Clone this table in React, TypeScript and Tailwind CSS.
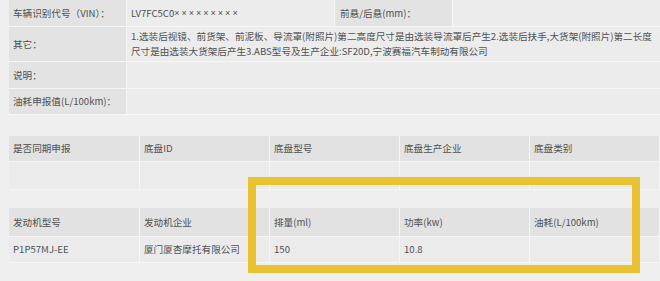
import React from "react";

const font = {
  fontFamily: '"Noto Sans CJK SC", "Noto Sans", sans-serif',
};

function Cell({
  children,
  className = "",
}: {
  children?: React.ReactNode;
  className?: string;
}) {
  return (
    <div
      className={
        "flex items-center pl-[4px] border-r border-b border-[#f6f6f6] " +
        className
      }
    >
      {children}
    </div>
  );
}

export default function App() {
  const cols5 = "grid grid-cols-[131px_130px_130px_130px_130px]";
  return (
    <div
      className="relative w-[660px] h-[281px] overflow-hidden bg-[#efefef] text-[9.6px] leading-[15px] text-[#505050]"
      style={font}
    >
      <div className="pl-[9px] flex flex-col">
        {/* top table */}
        <div className="grid grid-cols-[118px_208px_118px_216px]">
          <Cell className="h-[27px] bg-[#e3e3e3]">车辆识别代号（VIN）：</Cell>
          <Cell className="h-[27px] bg-[#ececec]">
            <span>LV7FC5C0</span>
            <span className="font-['Liberation_Sans',sans-serif] tracking-[2px] text-[9px]">
              ×××××××××
            </span>
          </Cell>
          <Cell className="h-[27px] bg-[#e3e3e3] pl-[5px]">前悬/后悬(mm)：</Cell>
          <Cell className="h-[27px] bg-[#ececec]" />

          <Cell className="h-[35px] bg-[#e3e3e3]">其它：</Cell>
          <div className="col-span-3 h-[35px] bg-[#ececec] border-b border-[#f6f6f6] pl-[4px] flex flex-col justify-center">
            <span className="whitespace-nowrap">
              1.选装后视镜、前货架、前泥板、导流罩(附照片)第二高度尺寸是由选装导流罩后产生2.选装后扶手,大货架(附照片)第二长度
            </span>
            <span className="whitespace-nowrap">
              尺寸是由选装大货架后产生3.ABS型号及生产企业:SF20D,宁波赛福汽车制动有限公司
            </span>
          </div>

          <Cell className="h-[27px] bg-[#e3e3e3]">说明：</Cell>
          <div className="col-span-3 h-[27px] bg-[#ececec] border-b border-[#f6f6f6]" />

          <Cell className="h-[26px] bg-[#e3e3e3]">油耗申报值(L/100km)：</Cell>
          <div className="col-span-3 h-[26px] bg-[#ececec] border-b border-[#f6f6f6]" />
        </div>

        {/* chassis table */}
        <div className={cols5 + " mt-[21px]"}>
          <Cell className="h-[26px] bg-[#e2e2e2]">是否同期申报</Cell>
          <Cell className="h-[26px] bg-[#e2e2e2]">底盘ID</Cell>
          <Cell className="h-[26px] bg-[#e2e2e2]">底盘型号</Cell>
          <Cell className="h-[26px] bg-[#e2e2e2]">底盘生产企业</Cell>
          <Cell className="h-[26px] bg-[#e2e2e2]">底盘类别</Cell>
          <Cell className="h-[28px] bg-[#ebebeb]" />
          <Cell className="h-[28px] bg-[#ebebeb]" />
          <Cell className="h-[28px] bg-[#ebebeb]" />
          <Cell className="h-[28px] bg-[#ebebeb]" />
          <Cell className="h-[28px] bg-[#ebebeb]" />
        </div>

        {/* engine table */}
        <div className={cols5 + " mt-[18px]"}>
          <Cell className="h-[29px] bg-[#e2e2e2]">发动机型号</Cell>
          <Cell className="h-[29px] bg-[#e2e2e2]">发动机企业</Cell>
          <Cell className="h-[29px] bg-[#e2e2e2]">排量(ml)</Cell>
          <Cell className="h-[29px] bg-[#e2e2e2]">功率(kw)</Cell>
          <Cell className="h-[29px] bg-[#e2e2e2]">油耗(L/100km)</Cell>
          <Cell className="h-[26px] bg-[#ebebeb]">P1P57MJ-EE</Cell>
          <Cell className="h-[26px] bg-[#ebebeb]">厦门厦杏摩托有限公司</Cell>
          <Cell className="h-[26px] bg-[#ebebeb]">150</Cell>
          <Cell className="h-[26px] bg-[#ebebeb]">10.8</Cell>
          <Cell className="h-[26px] bg-[#ebebeb]" />
        </div>
      </div>

      {/* yellow highlight */}
      <div className="absolute left-[248px] top-[177px] w-[392px] h-[96px] border-[8px] border-[#e9c232]" />
    </div>
  );
}
